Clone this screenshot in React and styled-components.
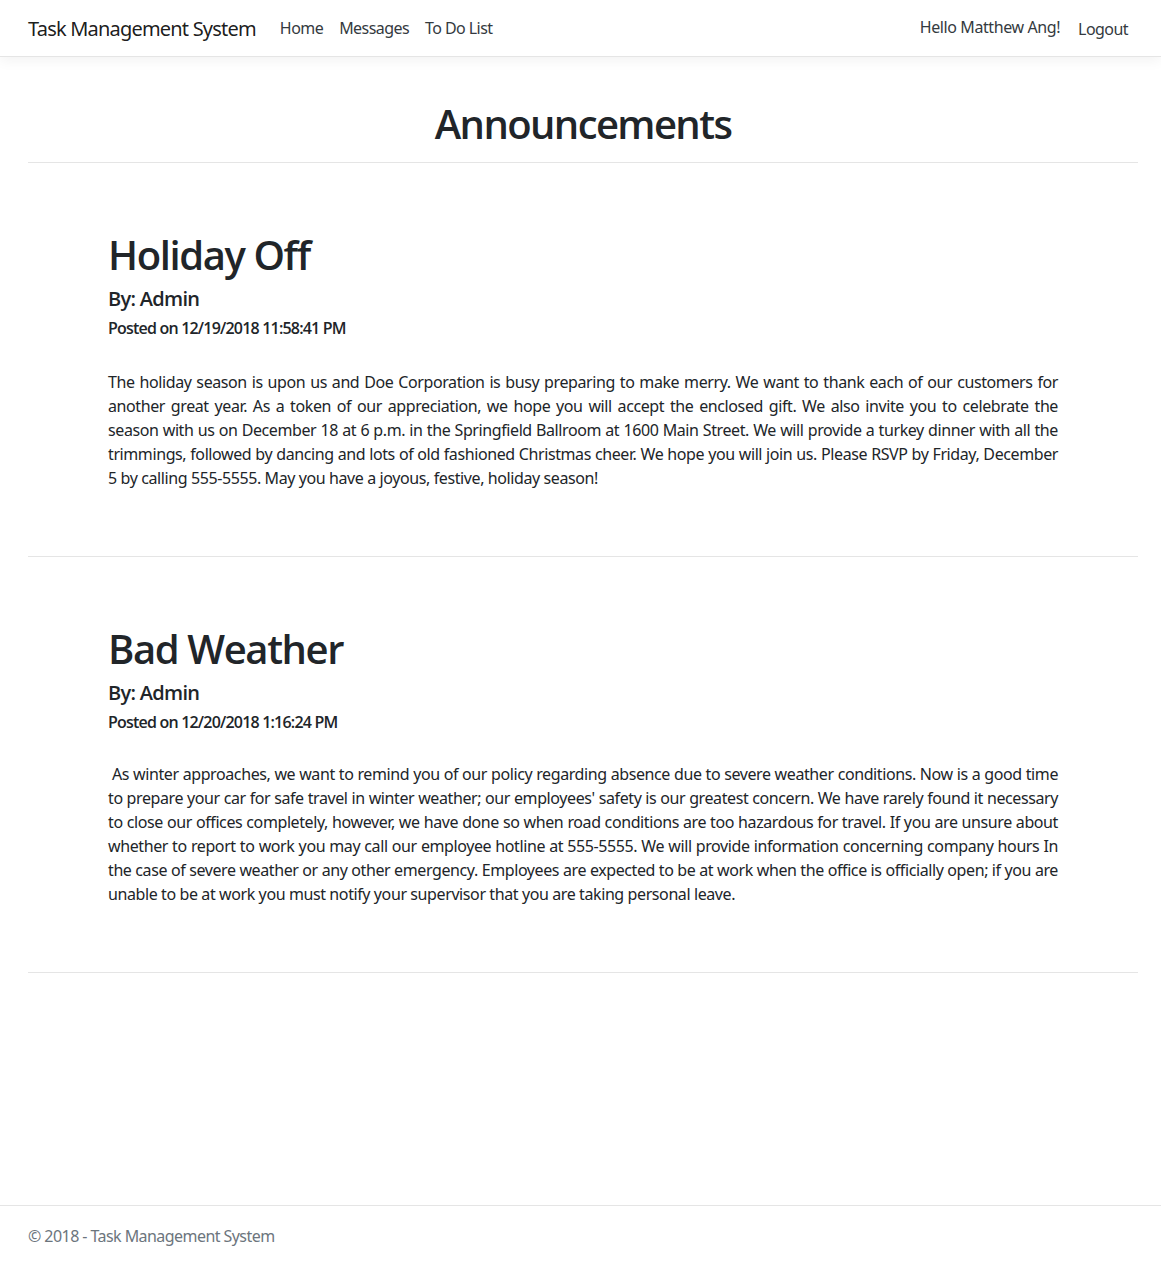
import React from "react";
import styled, { createGlobalStyle } from "styled-components";

const GlobalStyle = createGlobalStyle`
  * { box-sizing: border-box; }
  html, body { margin: 0; padding: 0; background: #fff; }
  body {
    font-family: "Noto Sans", "Open Sans", sans-serif;
    font-size: 16px;
    line-height: 1.5;
    letter-spacing: -0.56px;
    color: #212529;
  }
`;

const headingFont = `"Open Sans", "Noto Sans", sans-serif`;

const Page = styled.div`
  min-height: 100vh;
  display: flex;
  flex-direction: column;
`;

const Header = styled.header`
  height: 57px;
  background: #fff;
  border-bottom: 1px solid #e5e5e5;
  box-shadow: 0 0.25rem 0.75rem rgba(0, 0, 0, 0.05);
`;

const Container = styled.div`
  width: 1110px;
  margin-left: 28px;
`;

const NavBar = styled(Container).attrs({ as: "nav" })`
  height: 56px;
  display: flex;
  align-items: center;
`;

const Brand = styled.a`
  font-size: 20px;
  line-height: 30px;
  letter-spacing: -0.8px;
  color: rgba(0, 0, 0, 0.9);
  text-decoration: none;
  margin-right: 16px;
  transform: translateY(1px);
`;

const NavList = styled.ul`
  display: flex;
  list-style: none;
  margin: 0 ${(p) => (p.$end ? 2 : 0)}px 0 0;
  padding: 0;
  flex: ${(p) => (p.$grow ? 1 : "none")};
  justify-content: ${(p) => (p.$end ? "flex-end" : "flex-start")};
`;

const NavItem = styled.li`
  margin-left: ${(p) => p.$gap || 0}px;
`;

const NavLink = styled.a`
  display: block;
  padding: 8px;
  color: #343a40;
  text-decoration: none;
  letter-spacing: ${(p) => p.$ls ?? -0.56}px;
  transform: translateY(${(p) => p.$shift || 0}px);
`;

const Main = styled(Container).attrs({ as: "main" })`
  padding-top: 16px;
`;

const PageTitle = styled.h1`
  margin: 27px 0 14px;
  text-align: center;
  font-family: ${headingFont};
  font-size: 40px;
  font-weight: 600;
  line-height: 1.2;
  letter-spacing: -1.6px;
`;

const Divider = styled.hr`
  margin: 0;
  border: 0;
  border-top: 1px solid rgba(0, 0, 0, 0.1);
`;

const Article = styled.article`
  padding: 68px 80px 66px 80px;
`;

const ArticleTitle = styled.h1`
  margin: 0 0 8px;
  font-family: ${headingFont};
  font-size: 40px;
  font-weight: 600;
  line-height: 1.2;
  letter-spacing: -1.4px;
`;

const Author = styled.h5`
  margin: 0 0 8px;
  font-family: ${headingFont};
  font-size: 20px;
  font-weight: 600;
  line-height: 1.2;
  letter-spacing: -0.7px;
`;

const Posted = styled.h6`
  margin: 0;
  font-family: ${headingFont};
  font-size: 16px;
  font-weight: 600;
  line-height: 1.2;
  letter-spacing: -0.8px;
`;

const Body = styled.p`
  margin: ${(p) => p.$gap}px 0 0;
  text-align: justify;
  white-space: pre-wrap;
  letter-spacing: -0.4px;
`;

const Footer = styled.footer`
  margin-top: auto;
  height: 60px;
  line-height: 60px;
  border-top: 1px solid #e5e5e5;
  color: #6c757d;
  white-space: nowrap;
`;

const announcements = [
  {
    title: "Holiday Off",
    author: "Admin",
    posted: "12/19/2018 11:58:41 PM",
    gap: 32,
    body:
      "The holiday season is upon us and Doe Corporation is busy preparing to make merry. We want to thank each of our customers for another great year. As a token of our appreciation, we hope you will accept the enclosed gift. We also invite you to celebrate the season with us on December 18 at 6 p.m. in the Springfield Ballroom at 1600 Main Street. We will provide a turkey dinner with all the trimmings, followed by dancing and lots of old fashioned Christmas cheer. We hope you will join us. Please RSVP by Friday, December 5 by calling 555-5555. May you have a joyous, festive, holiday season!",
  },
  {
    title: "Bad Weather",
    author: "Admin",
    posted: "12/20/2018 1:16:24 PM",
    gap: 30,
    body:
      " As winter approaches, we want to remind you of our policy regarding absence due to severe weather conditions. Now is a good time to prepare your car for safe travel in winter weather; our employees' safety is our greatest concern. We have rarely found it necessary to close our offices completely, however, we have done so when road conditions are too hazardous for travel. If you are unsure about whether to report to work you may call our employee hotline at 555-5555. We will provide information concerning company hours In the case of severe weather or any other emergency. Employees are expected to be at work when the office is officially open; if you are unable to be at work you must notify your supervisor that you are taking personal leave.",
  },
];

export default function App() {
  return (
    <Page>
      <GlobalStyle />
      <Header>
        <NavBar>
          <Brand href="#">Task Management System</Brand>
          <NavList $grow>
            <NavItem><NavLink href="#">Home</NavLink></NavItem>
            <NavItem><NavLink href="#">Messages</NavLink></NavItem>
            <NavItem><NavLink href="#">To Do List</NavLink></NavItem>
          </NavList>
          <NavList $end>
            <NavItem><NavLink href="#" $shift={-1} $ls={-0.4}>Hello Matthew Ang!</NavLink></NavItem>
            <NavItem $gap={2}><NavLink href="#" $shift={1}>Logout</NavLink></NavItem>
          </NavList>
        </NavBar>
      </Header>
      <Main>
        <PageTitle>Announcements</PageTitle>
        <Divider />
        {announcements.map((a) => (
          <React.Fragment key={a.title}>
            <Article>
              <ArticleTitle>{a.title}</ArticleTitle>
              <Author>By: {a.author}</Author>
              <Posted>Posted on {a.posted}</Posted>
              <Body $gap={a.gap}>{a.body}</Body>
            </Article>
            <Divider />
          </React.Fragment>
        ))}
      </Main>
      <Footer>
        <Container>© 2018 - Task Management System</Container>
      </Footer>
    </Page>
  );
}
